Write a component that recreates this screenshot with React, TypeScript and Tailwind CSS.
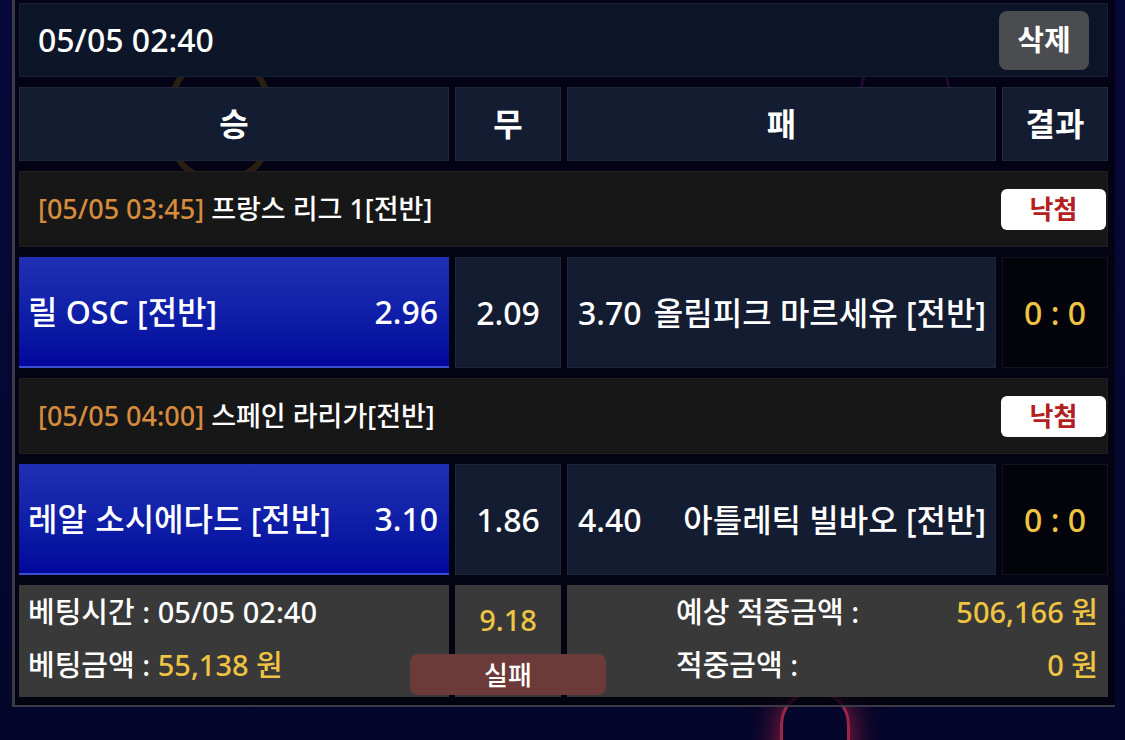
const gold = "text-[#efc443]";

type Match = {
  league: string;
  time: string;
  home: string;
  homeOdds: string;
  draw: string;
  awayOdds: string;
  away: string;
  score: string;
};

const matches: Match[] = [
  {
    time: "[05/05 03:45]",
    league: "프랑스 리그 1[전반]",
    home: "릴 OSC [전반]",
    homeOdds: "2.96",
    draw: "2.09",
    awayOdds: "3.70",
    away: "올림피크 마르세유 [전반]",
    score: "0 : 0",
  },
  {
    time: "[05/05 04:00]",
    league: "스페인 라리가[전반]",
    home: "레알 소시에다드 [전반]",
    homeOdds: "3.10",
    draw: "1.86",
    awayOdds: "4.40",
    away: "아틀레틱 빌바오 [전반]",
    score: "0 : 0",
  },
];

function MatchBlock({ m }: { m: Match }) {
  return (
    <>
      <div className="flex h-[76px] items-center justify-between border border-[#202020] bg-[#171717] pl-[18px] pr-[1px]">
        <p className="text-[27px] text-white">
          <span className="text-[#d68b3d]">{m.time}</span> {m.league}
        </p>
        <span className="flex h-[41px] w-[105px] items-center justify-center rounded-md bg-white text-[26px] font-bold text-[#b3201e]">
          낙첨
        </span>
      </div>
      <div className="grid h-[111px] grid-cols-[430px_106px_429px_106px] gap-x-[6px] text-[32px] text-white">
        <div className="flex items-center justify-between border-b-2 border-[#3b4fd0] bg-gradient-to-b from-[#1f30b4] to-[#03069c] pl-[9px] pr-[11px]">
          <span>{m.home}</span>
          <span>{m.homeOdds}</span>
        </div>
        <div className="flex items-center justify-center border border-[#1d273b] bg-[#131c30]">
          {m.draw}
        </div>
        <div className="flex items-center justify-between border border-[#1d273b] bg-[#131c30] pl-[10px] pr-[9px]">
          <span>{m.awayOdds}</span>
          <span>{m.away}</span>
        </div>
        <div className={`flex items-center justify-center border border-[#10121d] bg-[#03030c] ${gold}`}>
          {m.score}
        </div>
      </div>
    </>
  );
}

export default function App() {
  return (
    <div className="relative h-[740px] w-[1125px] overflow-hidden bg-gradient-to-b from-[#07083a] to-[#05062a] font-['Noto_Sans','Noto_Sans_CJK_KR',sans-serif] font-medium">
      {/* faint neon decorations peeking through the gaps */}
      <div className="absolute left-[170px] top-[60px] h-[120px] w-[100px] rounded-[40px] border-[6px] border-[#c09020]" />
      <div className="absolute left-[860px] top-[50px] h-[80px] w-[90px] rounded-full border-[3px] border-[#9a30c0]" />
      <div className="absolute left-[780px] top-[690px] h-[90px] w-[70px] rounded-t-full border-[3px] border-[#c03050]/80 shadow-[0_0_30px_#a02040]" />

      <div className="relative ml-[12px] flex w-[1103px] flex-col gap-[10px] border-b-2 border-l-[3px] border-[#3a3b46] bg-[#02030c]/80 pb-[8px] pl-[4px] pr-[7px] pt-[3px] text-white">
        {/* header */}
        <div className="flex h-[74px] items-center justify-between border border-[#142038] bg-[#0c1628] pl-[18px] pr-[18px]">
          <span className="text-[32px]">05/05 02:40</span>
          <button className="flex h-[59px] w-[90px] items-center justify-center rounded-lg bg-[#4b4c4f] text-[29px] font-bold">
            삭제
          </button>
        </div>

        {/* column titles */}
        <div className="grid h-[74px] grid-cols-[430px_106px_429px_106px] gap-x-[6px] text-[32px] font-bold">
          <div className="flex items-center justify-center border border-[#1e2940] bg-[#131c30]">승</div>
          <div className="flex items-center justify-center border border-[#1e2940] bg-[#131c30]">무</div>
          <div className="flex items-center justify-center border border-[#1e2940] bg-[#131c30]">패</div>
          <div className="flex items-center justify-center border border-[#1e2940] bg-[#131c30]">결과</div>
        </div>

        {matches.map((m) => (
          <MatchBlock key={m.time} m={m} />
        ))}

        {/* summary */}
        <div className="relative grid h-[112px] grid-cols-[430px_106px_541px] gap-x-[6px] text-[29px] leading-[40px]">
          <div className="flex flex-col justify-center gap-[13px] bg-[#393939] pb-[5px] pl-[9px]">
            <p>베팅시간 : 05/05 02:40</p>
            <p>
              베팅금액 : <span className={gold}>55,138 원</span>
            </p>
          </div>
          <div className={`flex justify-center bg-[#393939] pt-[15px] ${gold}`}>9.18</div>
          <div className="flex flex-col justify-center gap-[13px] bg-[#393939] pb-[5px] pl-[109px] pr-[10px]">
            <p className="flex justify-between">
              <span>예상 적중금액 :</span>
              <span className={gold}>506,166 원</span>
            </p>
            <p className="flex justify-between">
              <span>적중금액 :</span>
              <span className={gold}>0 원</span>
            </p>
          </div>
          <span className="absolute left-[391px] top-[69px] flex h-[41px] w-[196px] items-center justify-center rounded-lg bg-[#6d3a3a] text-[26px]">
            실패
          </span>
        </div>
      </div>
    </div>
  );
}
